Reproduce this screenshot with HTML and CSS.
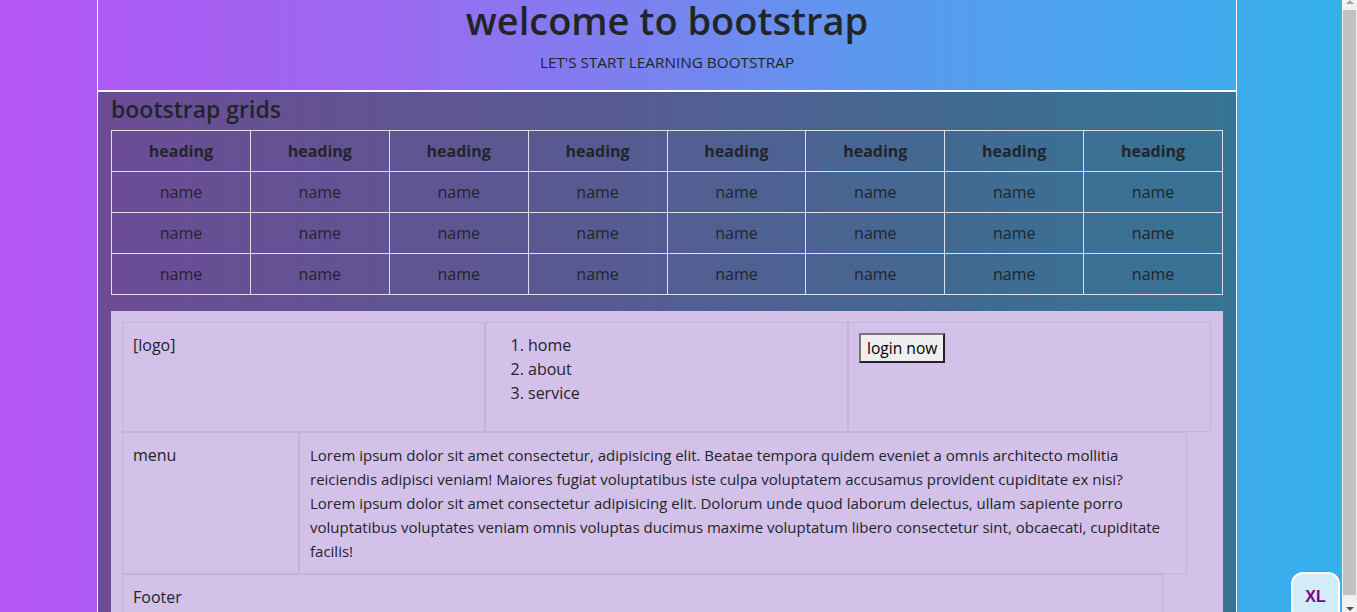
FILE: index.html
```html
<!DOCTYPE html>
<html lang="en">
<head>
<meta charset="utf-8">
<title>bootstrap grids</title>
<link rel="stylesheet" href="styles.css">
</head>
<body>
<div class="page">
  <header class="hero">
    <h1 class="hero-title">welcome to bootstrap</h1>
    <p class="hero-sub">LET'S START LEARNING BOOTSTRAP</p>
  </header>
  <section class="grids">
    <h4 class="grids-title">bootstrap grids</h4>
    <table class="grid-table">
      <thead>
        <tr><th>heading</th><th>heading</th><th>heading</th><th>heading</th><th>heading</th><th>heading</th><th>heading</th><th>heading</th></tr>
      </thead>
      <tbody>
        <tr><td>name</td><td>name</td><td>name</td><td>name</td><td>name</td><td>name</td><td>name</td><td>name</td></tr>
        <tr><td>name</td><td>name</td><td>name</td><td>name</td><td>name</td><td>name</td><td>name</td><td>name</td></tr>
        <tr><td>name</td><td>name</td><td>name</td><td>name</td><td>name</td><td>name</td><td>name</td><td>name</td></tr>
      </tbody>
    </table>
    <div class="layout">
      <div class="row row-top">
        <div class="cell">[logo]</div>
        <div class="cell">
          <ol class="nav-list">
            <li>home</li>
            <li>about</li>
            <li>service</li>
          </ol>
        </div>
        <div class="cell"><button class="login-btn">login now</button></div>
      </div>
      <div class="row row-mid">
        <div class="cell cell-menu">menu</div>
        <div class="cell cell-main">Lorem ipsum dolor sit amet consectetur, adipisicing elit. Beatae tempora quidem eveniet a omnis architecto mollitia<br>reiciendis adipisci veniam! Maiores fugiat voluptatibus iste culpa voluptatem accusamus provident cupiditate ex nisi?<br>Lorem ipsum dolor sit amet consectetur adipisicing elit. Dolorum unde quod laborum delectus, ullam sapiente porro<br>voluptatibus voluptates veniam omnis voluptas ducimus maxime voluptatum libero consectetur sint, obcaecati, cupiditate<br>facilis!</div>
      </div>
      <div class="row row-foot">
        <div class="cell">Footer</div>
      </div>
    </div>
  </section>
</div>
<div class="bp-badge">XL</div>
<div class="scrollbar">
  <div class="sb-up"></div>
  <div class="sb-thumb"></div>
  <div class="sb-down"></div>
</div>
</body>
</html>
```

FILE: styles.css
```css
html {
  background-color: #35b0ec;
  background-image: linear-gradient(to right, #b455f5 0%, #9a6af1 30%, #5c98ee 65%, #35b0ec 100%);
  background-size: 1342px 100%;
  background-repeat: no-repeat;
  background-attachment: fixed;
  min-height: 100%;
}
body {
  margin: 0;
  font-family: "Open Sans", "Noto Sans", sans-serif;
  font-size: 16px;
  line-height: 24px;
  color: #212529;
}
.page {
  margin-left: 97px;
  width: 1138px;
  border-left: 1px solid #fff;
  border-right: 1px solid #fff;
}
.hero {
  height: 90px;
  border-bottom: 2px solid #fff;
  text-align: center;
}
.hero-title {
  margin: 0;
  font-size: 38px;
  line-height: 40px;
  font-weight: 600;
}
.hero-sub {
  margin: 10px 0 0;
  font-size: 15.3px;
  line-height: 24px;
}
.grids {
  background: linear-gradient(to right, #6c4c95 0%, #5a5891 40%, #3f6c93 80%, #377494 100%);
  padding: 1px 13px 40px 13px;
}
.grids-title {
  margin: 2px 0 7px;
  font-size: 23px;
  line-height: 28px;
  font-weight: 600;
}
.grid-table {
  width: 100%;
  border-collapse: collapse;
  margin-bottom: 16px;
  table-layout: fixed;
}
.grid-table th,
.grid-table td {
  border: 1px solid #dfdde8;
  padding: 8px;
  text-align: center;
  height: 24px;
}
.grid-table th {
  font-weight: 700;
}
.layout {
  background: #d3c1ea;
  padding: 11px;
}
.row {
  display: flex;
}
.row-top {
  width: 1089px;
}
.row-mid {
  width: 1065px;
}
.row-foot {
  width: 1041px;
}
.cell {
  border: 1px solid #c2b4d7;
  padding: 10px;
  box-sizing: border-box;
}
.row-top .cell {
  flex: 1 1 0;
}
.cell-menu {
  width: 177px;
  flex: none;
}
.cell-main {
  flex: 1;
  white-space: nowrap;
  font-size: 15px;
}
.row-foot .cell {
  flex: 1;
}
.nav-list {
  margin: 0 0 16px;
  padding-left: 32px;
}
.login-btn {
  font-family: inherit;
  font-size: 15.6px;
  line-height: 24px;
  padding: 1px 6px;
  border: 2px outset #767676;
  border-radius: 0;
  background: #efefef;
  color: #000;
}
.bp-badge {
  position: fixed;
  right: 17px;
  bottom: -12px;
  width: 49px;
  height: 52px;
  box-sizing: border-box;
  border: 2px solid #fff;
  border-radius: 12px;
  background: #d2ecf9;
  color: #800080;
  font-family: "Liberation Sans", Arial, sans-serif;
  font-weight: 700;
  font-size: 16px;
  text-align: center;
  padding-top: 13px;
  line-height: 20px;
}
.scrollbar {
  position: fixed;
  top: 0;
  right: 0;
  width: 15px;
  height: 100%;
  background: #f1f1f1;
  display: flex;
  flex-direction: column;
  align-items: center;
}
.sb-up {
  width: 0;
  height: 0;
  border-left: 4px solid transparent;
  border-right: 4px solid transparent;
  border-bottom: 4px solid #a3a3a3;
}
.sb-thumb {
  margin-top: 6px;
  width: 13px;
  height: 585px;
  background: #c1c1c1;
}
.sb-down {
  margin-top: 12px;
  width: 0;
  height: 0;
  border-left: 4px solid transparent;
  border-right: 4px solid transparent;
  border-top: 4px solid #505050;
}
```
